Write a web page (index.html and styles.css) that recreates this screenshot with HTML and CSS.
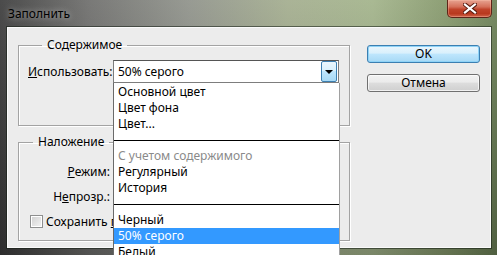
FILE: index.html
```html
<!DOCTYPE html>
<html lang="ru">
<head>
    <meta charset="UTF-8">
    <title>Заполнить</title>
    <link rel="stylesheet" href="styles.css">
</head>
<body>
    <div class="window">
        <div class="titlebar">
            <span class="title">Заполнить</span>
            <button class="close-btn" aria-label="Закрыть">
                <svg width="14" height="11" viewBox="0 0 14 11">
                    <path d="M2 1.5 L12 9.5 M12 1.5 L2 9.5" stroke="#5a1c10" stroke-width="4.2" stroke-linecap="square"/>
                    <path d="M2 1.5 L12 9.5 M12 1.5 L2 9.5" stroke="#fff" stroke-width="2.2" stroke-linecap="square"/>
                </svg>
            </button>
        </div>

        <div class="client">
            <div class="groups">
                <fieldset class="group group-content">
                    <legend>Содержимое</legend>
                    <div class="field-row">
                        <span class="field-label"><u>И</u>спользовать:</span>
                        <div class="combo">
                            <span class="combo-value">50% серого</span>
                            <span class="combo-arrow"></span>

                            <!-- open list of the combo -->
                            <ul class="dropdown">
                                <li>Основной цвет</li>
                                <li>Цвет фона</li>
                                <li>Цвет...</li>
                                <li class="separator"></li>
                                <li class="disabled">С учетом содержимого</li>
                                <li>Регулярный</li>
                                <li>История</li>
                                <li class="separator"></li>
                                <li>Черный</li>
                                <li class="selected">50% серого</li>
                                <li>Белый</li>
                            </ul>
                        </div>
                    </div>
                </fieldset>

                <fieldset class="group group-blend">
                    <legend>Наложение</legend>
                    <div class="blend-row"><span class="blend-label"><u>Р</u>ежим:</span></div>
                    <div class="blend-row"><span class="blend-label">Н<u>е</u>прозр.:</span></div>
                    <div class="check-row">
                        <span class="checkbox"></span>
                        <span class="check-text">Сохранить <u>п</u>розрачность</span>
                    </div>
                </fieldset>
            </div>

            <div class="buttons">
                <button class="btn btn-default">OK</button>
                <button class="btn">Отмена</button>
            </div>
        </div>
    </div>
</body>
</html>
```

FILE: styles.css
```css
body {
    margin: 0;
    width: 497px;
    height: 255px;
    overflow: hidden;
    font-family: 'Noto Sans', 'Open Sans', sans-serif;
    font-size: 12px;
    color: #000;
}

.window {
    position: relative;
    width: 497px;
    height: 255px;
    overflow: hidden;
    background:
        linear-gradient(to bottom, rgba(255, 255, 255, 0.08), rgba(0, 0, 0, 0.25)),
        linear-gradient(to right, #3c3c3c 0%, #6e6e6c 18%, #8f928a 38%, #a3ad8e 58%, #a2b38a 75%, #84976a 90%, #6a7f55 100%);
}

/* title bar */
.titlebar {
    height: 27px;
    display: flex;
    align-items: flex-start;
    justify-content: space-between;
}

.title {
    margin: 5px 0 0 8px;
    line-height: 18px;
    color: #000;
    text-shadow: 0 0 6px rgba(255, 255, 255, 0.6);
}

.close-btn {
    width: 45px;
    height: 18px;
    margin-right: 5px;
    padding: 0;
    border: 1px solid #5e2418;
    border-top: none;
    border-radius: 0 0 5px 5px;
    background: linear-gradient(to bottom, #e7a391 0%, #d5705a 40%, #c0432a 55%, #b8391f 80%, #d0634a 100%);
    box-shadow: inset 0 0 0 1px rgba(255, 200, 180, 0.35);
    display: flex;
    align-items: center;
    justify-content: center;
}

/* client area */
.client {
    margin-left: 7px;
    width: 482px;
    height: 219px;
    border: 1px solid #fafafa;
    box-shadow: 0 0 0 1px rgba(20, 30, 20, 0.55);
    background: #ececec;
    display: flex;
}

.groups {
    width: 332px;
    padding: 9px 0 0 10px;
}

.group {
    margin: 0;
    padding: 0;
    border: 1px solid #a3a3a3;
    box-shadow: 1px 1px 0 #fff, inset 1px 1px 0 #fff;
}

.group legend {
    margin-left: 14px;
    padding: 0 5px;
    line-height: 16px;
}

.group-content {
    padding: 7px 9px 42px 9px;
}

.group-blend {
    margin-top: 8px;
    padding: 10px 0 8px 0;
}

/* combo */
.field-row {
    display: flex;
    align-items: center;
}

.field-label {
    width: 85px;
}

.combo {
    position: relative;
    width: 224px;
    height: 21px;
    border: 1px solid #7d7d7d;
    border-top-color: #555;
    background: #fff;
    display: flex;
    align-items: center;
}

.combo-value {
    flex: 1;
    padding-left: 4px;
}

.combo-arrow {
    width: 14px;
    height: 19px;
    margin-right: 1px;
    border: 1px solid #3c7fb1;
    border-radius: 2px;
    background: linear-gradient(to bottom, #eaf6fd 0%, #d9f0fc 45%, #bee6fd 50%, #a7d9f5 100%);
    position: relative;
}

.combo-arrow::after {
    content: "";
    position: absolute;
    left: 3px;
    top: 8px;
    border-left: 4px solid transparent;
    border-right: 4px solid transparent;
    border-top: 4px solid #000;
}

.dropdown {
    position: absolute;
    left: -1px;
    top: 22px;
    width: 225px;
    margin: 0;
    padding: 1px 0 0 0;
    list-style: none;
    background: #fff;
    border-left: 1px solid #6a6a6a;
    border-right: 1px solid #a0a0a0;
    z-index: 2;
}

.dropdown li {
    height: 16px;
    line-height: 16px;
    padding-left: 4px;
    white-space: nowrap;
}

.dropdown .separator {
    display: flex;
    align-items: center;
    padding: 0;
}

.dropdown .separator::before {
    content: "";
    flex: 1;
    height: 1px;
    background: #000;
}

.dropdown .disabled {
    color: #8a8a8a;
}

.dropdown .selected {
    background: #3399ff;
    color: #fff;
}

/* blend rows */
.blend-row,
.check-row {
    height: 22px;
    display: flex;
    align-items: center;
}

.blend-row + .blend-row,
.check-row {
    margin-top: 3px;
}

.blend-label {
    width: 91px;
    text-align: right;
}

/* the open list covers the rest of this label */
.check-row {
    width: 83px;
    padding-left: 11px;
    gap: 3px;
    white-space: nowrap;
    overflow: hidden;
}

.checkbox {
    flex: none;
    width: 11px;
    height: 11px;
    border: 1px solid #8e8f8f;
    background: linear-gradient(135deg, #d0d0d0, #f4f4f4);
    box-shadow: inset 0 0 0 1px #fff;
}

/* buttons */
.buttons {
    margin-left: 17px;
    padding-top: 17px;
    display: flex;
    flex-direction: column;
    gap: 11px;
}

.btn {
    width: 113px;
    height: 18px;
    padding: 0;
    font-family: inherit;
    font-size: 12px;
    line-height: 14px;
    color: #000;
    border: 1px solid #707070;
    border-radius: 3px;
    background: linear-gradient(to bottom, #f2f2f2 0%, #ebebeb 45%, #dddddd 50%, #cfcfcf 100%);
    box-shadow: inset 0 0 0 1px rgba(255, 255, 255, 0.7);
}

.btn-default {
    border-color: #3c7fb1;
    background: linear-gradient(to bottom, #eaf6fd 0%, #d9f0fc 45%, #bee6fd 50%, #a7d9f5 100%);
    box-shadow: inset 0 0 0 1px #8fd3f7;
}
```
